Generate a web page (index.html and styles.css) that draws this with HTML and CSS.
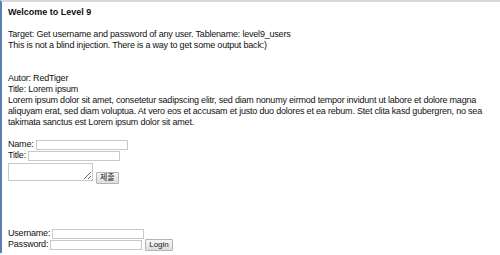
FILE: index.html
```html
<!DOCTYPE html>
<html lang="ko">
<head>
    <meta charset="UTF-8">
    <title>Level 9</title>
    <link rel="stylesheet" href="styles.css">
</head>
<body>
    <div class="frame">
        <div class="title">Welcome to Level 9</div>
        <div class="text intro">
            Target: Get username and password of any user. Tablename: level9_users<br>
            This is not a blind injection. There is a way to get some output back:)
        </div>
        <div class="text news">
            Autor: RedTiger<br>
            Title: Lorem ipsum<br>
            Lorem ipsum dolor sit amet, consetetur sadipscing elitr, sed diam nonumy eirmod tempor invidunt ut labore et dolore magna aliquyam erat, sed diam voluptua. At vero eos et accusam et justo duo dolores et ea rebum. Stet clita kasd gubergren, no sea takimata sanctus est Lorem ipsum dolor sit amet.
        </div>
        <form class="post">
            <div class="row">Name: <input type="text" class="field"></div>
            <div class="row">Title: <input type="text" class="field"></div>
            <div class="row area">
                <textarea class="box"></textarea>
                <button type="button" class="btn">제출</button>
            </div>
        </form>
        <form class="login">
            <div class="row">Username: <input type="text" class="field"></div>
            <div class="row">Password: <input type="password" class="field"> <button type="button" class="btn">Login</button></div>
        </form>
    </div>
</body>
</html>
```
FILE: styles.css
```css
html, body {
    margin: 0;
    padding: 0;
    background-color: #fff;
}
body {
    font-family: "Liberation Sans", Arial, "Noto Sans CJK KR", sans-serif;
    font-size: 9px;
    line-height: 11px;
    letter-spacing: -0.2px;
    color: #111;
}
.frame {
    height: 253px;
    border-top: 2px solid #d8d8d8;
    border-left: 2px solid #5b7fb3;
    padding: 5px 0 0 6px;
    box-sizing: border-box;
}
.title {
    font-weight: bold;
    letter-spacing: 0;
}
.intro {
    margin-top: 11px;
}
.news {
    margin-top: 22px;
    padding-right: 2px;
}
.post {
    margin: 11px 0 0;
}
.row {
    height: 11px;
    display: flex;
    align-items: center;
    gap: 2px;
}
.field {
    width: 92px;
    height: 10px;
    padding: 0;
    margin: 0;
    border: 1px solid #c8c8c8;
    box-sizing: border-box;
    font-size: 8px;
}
.row.area {
    height: auto;
    margin-top: 2px;
    align-items: flex-end;
}
.box {
    width: 85px;
    height: 18px;
    margin: 0;
    padding: 0;
    border: 1px solid #c8c8c8;
    box-sizing: border-box;
    resize: both;
}
.btn {
    height: 12px;
    padding: 0 3px;
    margin: 0 0 -3px 1px;
    font-family: "Liberation Sans", "Noto Sans CJK KR", sans-serif;
    font-size: 8px;
    line-height: 10px;
    letter-spacing: 0;
    color: #222;
    background: linear-gradient(#f6f6f6, #dedede);
    border: 1px solid #b4b4b4;
    border-radius: 1px;
}
.login {
    margin: 47px 0 0;
}
.login .btn {
    margin-bottom: 0;
}
```
